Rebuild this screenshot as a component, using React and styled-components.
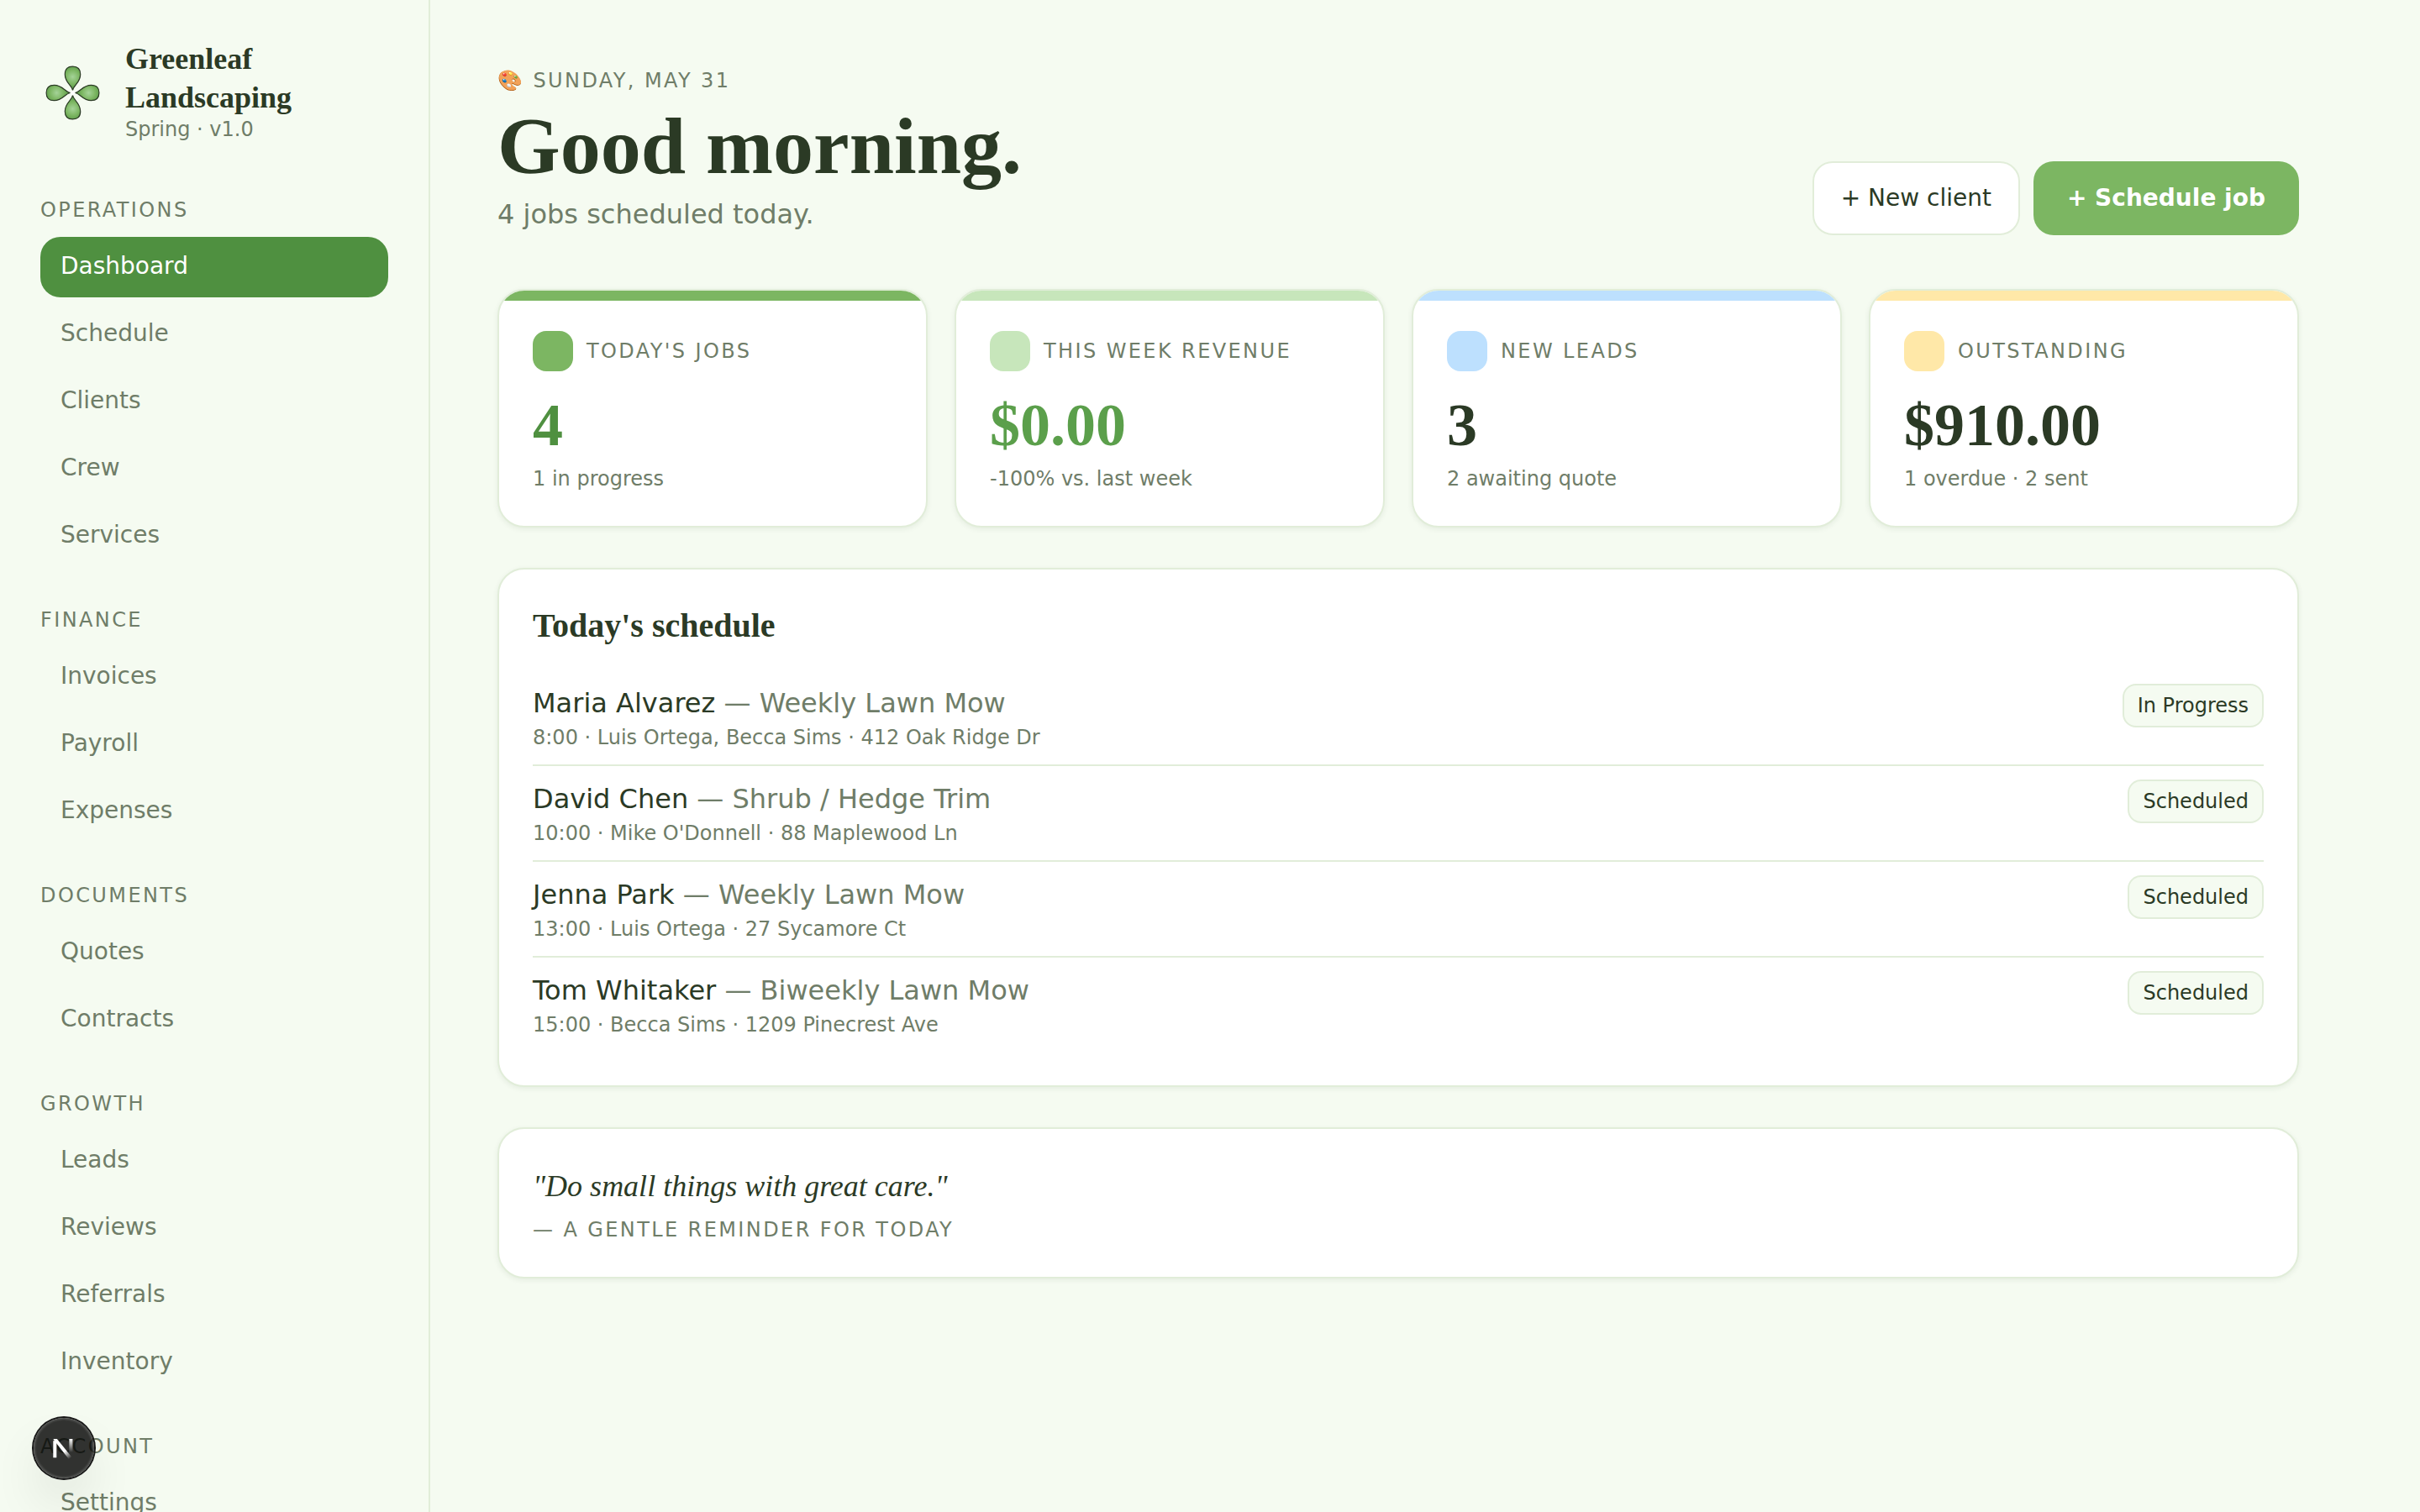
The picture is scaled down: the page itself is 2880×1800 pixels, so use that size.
import React from "react";
import styled, { createGlobalStyle } from "styled-components";

const sans = `"DejaVu Sans", sans-serif`;
const serif = `"Liberation Serif", serif`;

const NAV = [
  { title: "Operations", items: ["Dashboard", "Schedule", "Clients", "Crew", "Services"] },
  { title: "Finance", items: ["Invoices", "Payroll", "Expenses"] },
  { title: "Documents", items: ["Quotes", "Contracts"] },
  { title: "Growth", items: ["Leads", "Reviews", "Referrals", "Inventory"] },
  { title: "Account", items: ["Settings"] },
];

const STATS = [
  { label: "Today's jobs", value: "4", note: "1 in progress", accent: "#7cb662", color: "#4f9040" },
  { label: "This week revenue", value: "$0.00", note: "-100% vs. last week", accent: "#c7e6bb", color: "#5b9f4b" },
  { label: "New leads", value: "3", note: "2 awaiting quote", accent: "#bde0fe", color: "#2b3a25" },
  { label: "Outstanding", value: "$910.00", note: "1 overdue · 2 sent", accent: "#ffe8a8", color: "#2b3a25" },
];

const JOBS = [
  { client: "Maria Alvarez", service: "Weekly Lawn Mow", detail: "8:00 · Luis Ortega, Becca Sims · 412 Oak Ridge Dr", status: "In Progress" },
  { client: "David Chen", service: "Shrub / Hedge Trim", detail: "10:00 · Mike O'Donnell · 88 Maplewood Ln", status: "Scheduled" },
  { client: "Jenna Park", service: "Weekly Lawn Mow", detail: "13:00 · Luis Ortega · 27 Sycamore Ct", status: "Scheduled" },
  { client: "Tom Whitaker", service: "Biweekly Lawn Mow", detail: "15:00 · Becca Sims · 1209 Pinecrest Ave", status: "Scheduled" },
];

const PETAL = "M38 35 C37 29 28.8 26 28.8 16 C28.8 9.5 32 6.6 38 6.6 C44 6.6 47.2 9.5 47.2 16 C47.2 26 39 29 38 35 Z";

const Clover = () => (
  <svg width="77" height="77" viewBox="-0.5 -0.5 77 77">
    <defs>
      <radialGradient id="leaf" gradientUnits="userSpaceOnUse" cx="38" cy="19" r="16">
        <stop offset="0" stopColor="#a5d398" />
        <stop offset="0.5" stopColor="#7cb662" />
        <stop offset="1" stopColor="#4f9040" />
      </radialGradient>
    </defs>
    {[0, 90, 180, 270].map((deg) => (
      <path key={deg} d={PETAL} transform={`rotate(${deg} 38 38)`} fill="url(#leaf)" stroke="#2b3a25" strokeWidth="1.2" />
    ))}
    <circle cx="38" cy="38" r="2.4" fill="#fff" />
  </svg>
);

const NextMark = () => (
  <svg width="40" height="40" viewBox="0 0 40 40" fill="none">
    <defs>
      <linearGradient id="diag" x1="20" y1="19" x2="29" y2="31" gradientUnits="userSpaceOnUse">
        <stop offset="0.3" stopColor="#fff" />
        <stop offset="1" stopColor="#fff" stopOpacity="0" />
      </linearGradient>
      <linearGradient id="stem" x1="0" y1="9" x2="0" y2="25" gradientUnits="userSpaceOnUse">
        <stop stopColor="#fff" />
        <stop offset="1" stopColor="#fff" stopOpacity="0" />
      </linearGradient>
    </defs>
    <path d="M9.3 31.3 V11.2" stroke="#fff" strokeWidth="4" />
    <path d="M7.3 9 H11.8 L32.3 34.3 L28.8 36.8 L9 11.6 Z" fill="url(#diag)" />
    <rect x="26.4" y="9" width="4" height="16" fill="url(#stem)" />
  </svg>
);

export default function App() {
  return (
    <Page>
      <GlobalStyle />
      <Sidebar>
        <Brand>
          <Clover />
          <div>
            <BrandName>Greenleaf Landscaping</BrandName>
            <BrandNote>Spring · v1.0</BrandNote>
          </div>
        </Brand>
        {NAV.map((group) => (
          <NavGroup key={group.title}>
            <NavTitle>{group.title}</NavTitle>
            {group.items.map((item) => (
              <NavItem key={item} $active={item === "Dashboard"}>{item}</NavItem>
            ))}
          </NavGroup>
        ))}
      </Sidebar>

      <Main>
        <Header>
          <div>
            <DateLine>🎨 Sunday, May 31</DateLine>
            <Greeting>Good morning.</Greeting>
            <Summary>4 jobs scheduled today.</Summary>
          </div>
          <Actions>
            <Button>+ New client</Button>
            <Button $primary>+ Schedule job</Button>
          </Actions>
        </Header>

        <Stats>
          {STATS.map((s) => (
            <StatCard key={s.label} $accent={s.accent}>
              <StatHead>
                <Swatch $color={s.accent} />
                <Eyebrow>{s.label}</Eyebrow>
              </StatHead>
              <StatValue $color={s.color}>{s.value}</StatValue>
              <StatNote>{s.note}</StatNote>
            </StatCard>
          ))}
        </Stats>

        <Card>
          <CardTitle>Today's schedule</CardTitle>
          {JOBS.map((job) => (
            <JobRow key={job.client}>
              <div>
                <JobName>{job.client} <span>— {job.service}</span></JobName>
                <JobDetail>{job.detail}</JobDetail>
              </div>
              <Badge>{job.status}</Badge>
            </JobRow>
          ))}
        </Card>

        <Card>
          <Quote>"Do small things with great care."</Quote>
          <Eyebrow>— A gentle reminder for today</Eyebrow>
        </Card>
      </Main>

      <DevButton>
        <NextMark />
      </DevButton>
    </Page>
  );
}

const GlobalStyle = createGlobalStyle`
  * {
    box-sizing: border-box;
  }

  body {
    margin: 0;
    background: #f5fbf1;
    overflow: hidden;
  }
`;

const Page = styled.div`
  display: flex;
  height: 1800px;
  overflow: hidden;
  background: #f5fbf1;
  color: #2b3a25;
  font-family: ${sans};
`;

const Sidebar = styled.aside`
  flex: none;
  width: 512px;
  padding: 48px;
  border-right: 2px solid #e1edd9;
  overflow: hidden;
`;

const Brand = styled.div`
  display: flex;
  align-items: center;
  gap: 24px;
  height: 124px;
  margin-bottom: 60px;

  > svg {
    flex: none;
  }
`;

const BrandName = styled.div`
  font: bold 36px/46px ${serif};
`;

const BrandNote = styled.div`
  padding-bottom: 4px;
  font-size: 24px;
  line-height: 30px;
  color: #6f7d68;
`;

const NavGroup = styled.nav`
  display: flex;
  flex-direction: column;
  gap: 8px;
  margin-bottom: 46px;
`;

const NavTitle = styled.div`
  margin-bottom: 6px;
  font-size: 24px;
  line-height: 36px;
  letter-spacing: 0.1em;
  text-transform: uppercase;
  color: #6f7d68;
`;

const NavItem = styled.a`
  padding: 15px 24px 17px;
  border-radius: 24px;
  font-size: 28px;
  line-height: 40px;
  color: ${(p) => (p.$active ? "#fff" : "#6f7d68")};
  background: ${(p) => (p.$active ? "#4f9040" : "transparent")};
`;

const Main = styled.main`
  display: flex;
  flex-direction: column;
  gap: 48px;
  width: 2304px;
  padding: 80px;
`;

const Header = styled.header`
  display: flex;
  justify-content: space-between;
  align-items: flex-end;
  margin-bottom: 16px;
`;

const Eyebrow = styled.div`
  font-size: 24px;
  line-height: 32px;
  letter-spacing: 0.1em;
  text-transform: uppercase;
  color: #6f7d68;
`;

const DateLine = styled(Eyebrow)`
  height: 32px;
  margin-bottom: 6px;
`;

const Greeting = styled.h1`
  margin: 0 0 2px;
  font: bold 96px/112px ${serif};
`;

const Summary = styled.div`
  padding-bottom: 2px;
  font-size: 32px;
  line-height: 46px;
  color: #6f7d68;
`;

const Actions = styled.div`
  display: flex;
  gap: 16px;
`;

const Button = styled.button`
  height: 88px;
  padding: 0 ${(p) => (p.$primary ? "40px" : "32px")} 2px;
  border: ${(p) => (p.$primary ? "none" : "2px solid #e1edd9")};
  border-radius: 24px;
  background: ${(p) => (p.$primary ? "#7cb662" : "#fff")};
  color: ${(p) => (p.$primary ? "#fff" : "#2b3a25")};
  font-family: ${sans};
  font-size: 28px;
  font-weight: ${(p) => (p.$primary ? 600 : 400)};
`;

const Card = styled.section`
  padding: 40px;
  border: 2px solid #e1edd9;
  border-radius: 32px;
  background: #fff;
  box-shadow: 0 2px 6px rgba(43, 58, 37, 0.08);
`;

const Stats = styled.div`
  display: grid;
  grid-template-columns: repeat(4, 1fr);
  gap: 32px;
`;

const StatCard = styled(Card)`
  height: 284px;
  padding: 0 40px;
  overflow: hidden;

  &::before {
    content: "";
    display: block;
    height: 12px;
    margin: 0 -40px 36px;
    background: ${(p) => p.$accent};
  }
`;

const StatHead = styled.div`
  display: flex;
  align-items: center;
  gap: 16px;
  margin-bottom: 16px;
`;

const Swatch = styled.span`
  width: 48px;
  height: 48px;
  border-radius: 16px;
  background: ${(p) => p.$color};
`;

const StatValue = styled.div`
  font: bold 72px/96px ${serif};
  color: ${(p) => p.$color};
`;

const StatNote = styled.div`
  font-size: 24px;
  line-height: 32px;
  color: #6f7d68;
`;

const CardTitle = styled.h2`
  margin: 0 0 26px;
  font: bold 40px/54px ${serif};
`;

const JobRow = styled.div`
  display: flex;
  justify-content: space-between;
  align-items: flex-start;
  padding: 16px 0 14px;

  & + & {
    border-top: 2px solid #e1edd9;
  }
`;

const JobName = styled.div`
  font-size: 32px;
  line-height: 46px;

  > span {
    color: #6f7d68;
  }
`;

const JobDetail = styled.div`
  font-size: 24px;
  line-height: 36px;
  color: #6f7d68;
`;

const Badge = styled.span`
  padding: 7px 16px;
  border: 2px solid #e1edd9;
  border-radius: 16px;
  background: #f5fbf1;
  font-size: 24px;
  line-height: 34px;
`;

const Quote = styled.div`
  margin-bottom: 8px;
  font: italic 36px/56px ${serif};
`;

const DevButton = styled.div`
  position: absolute;
  left: 40px;
  top: 1688px;
  display: grid;
  place-items: center;
  width: 72px;
  height: 72px;
  border-radius: 50%;
  background: rgba(0, 0, 0, 0.8);
  box-shadow: 0 0 0 2px #171717, inset 0 0 2px 2px rgba(255, 255, 255, 0.14), 0 32px 64px -16px rgba(0, 0, 0, 0.24);
`;
